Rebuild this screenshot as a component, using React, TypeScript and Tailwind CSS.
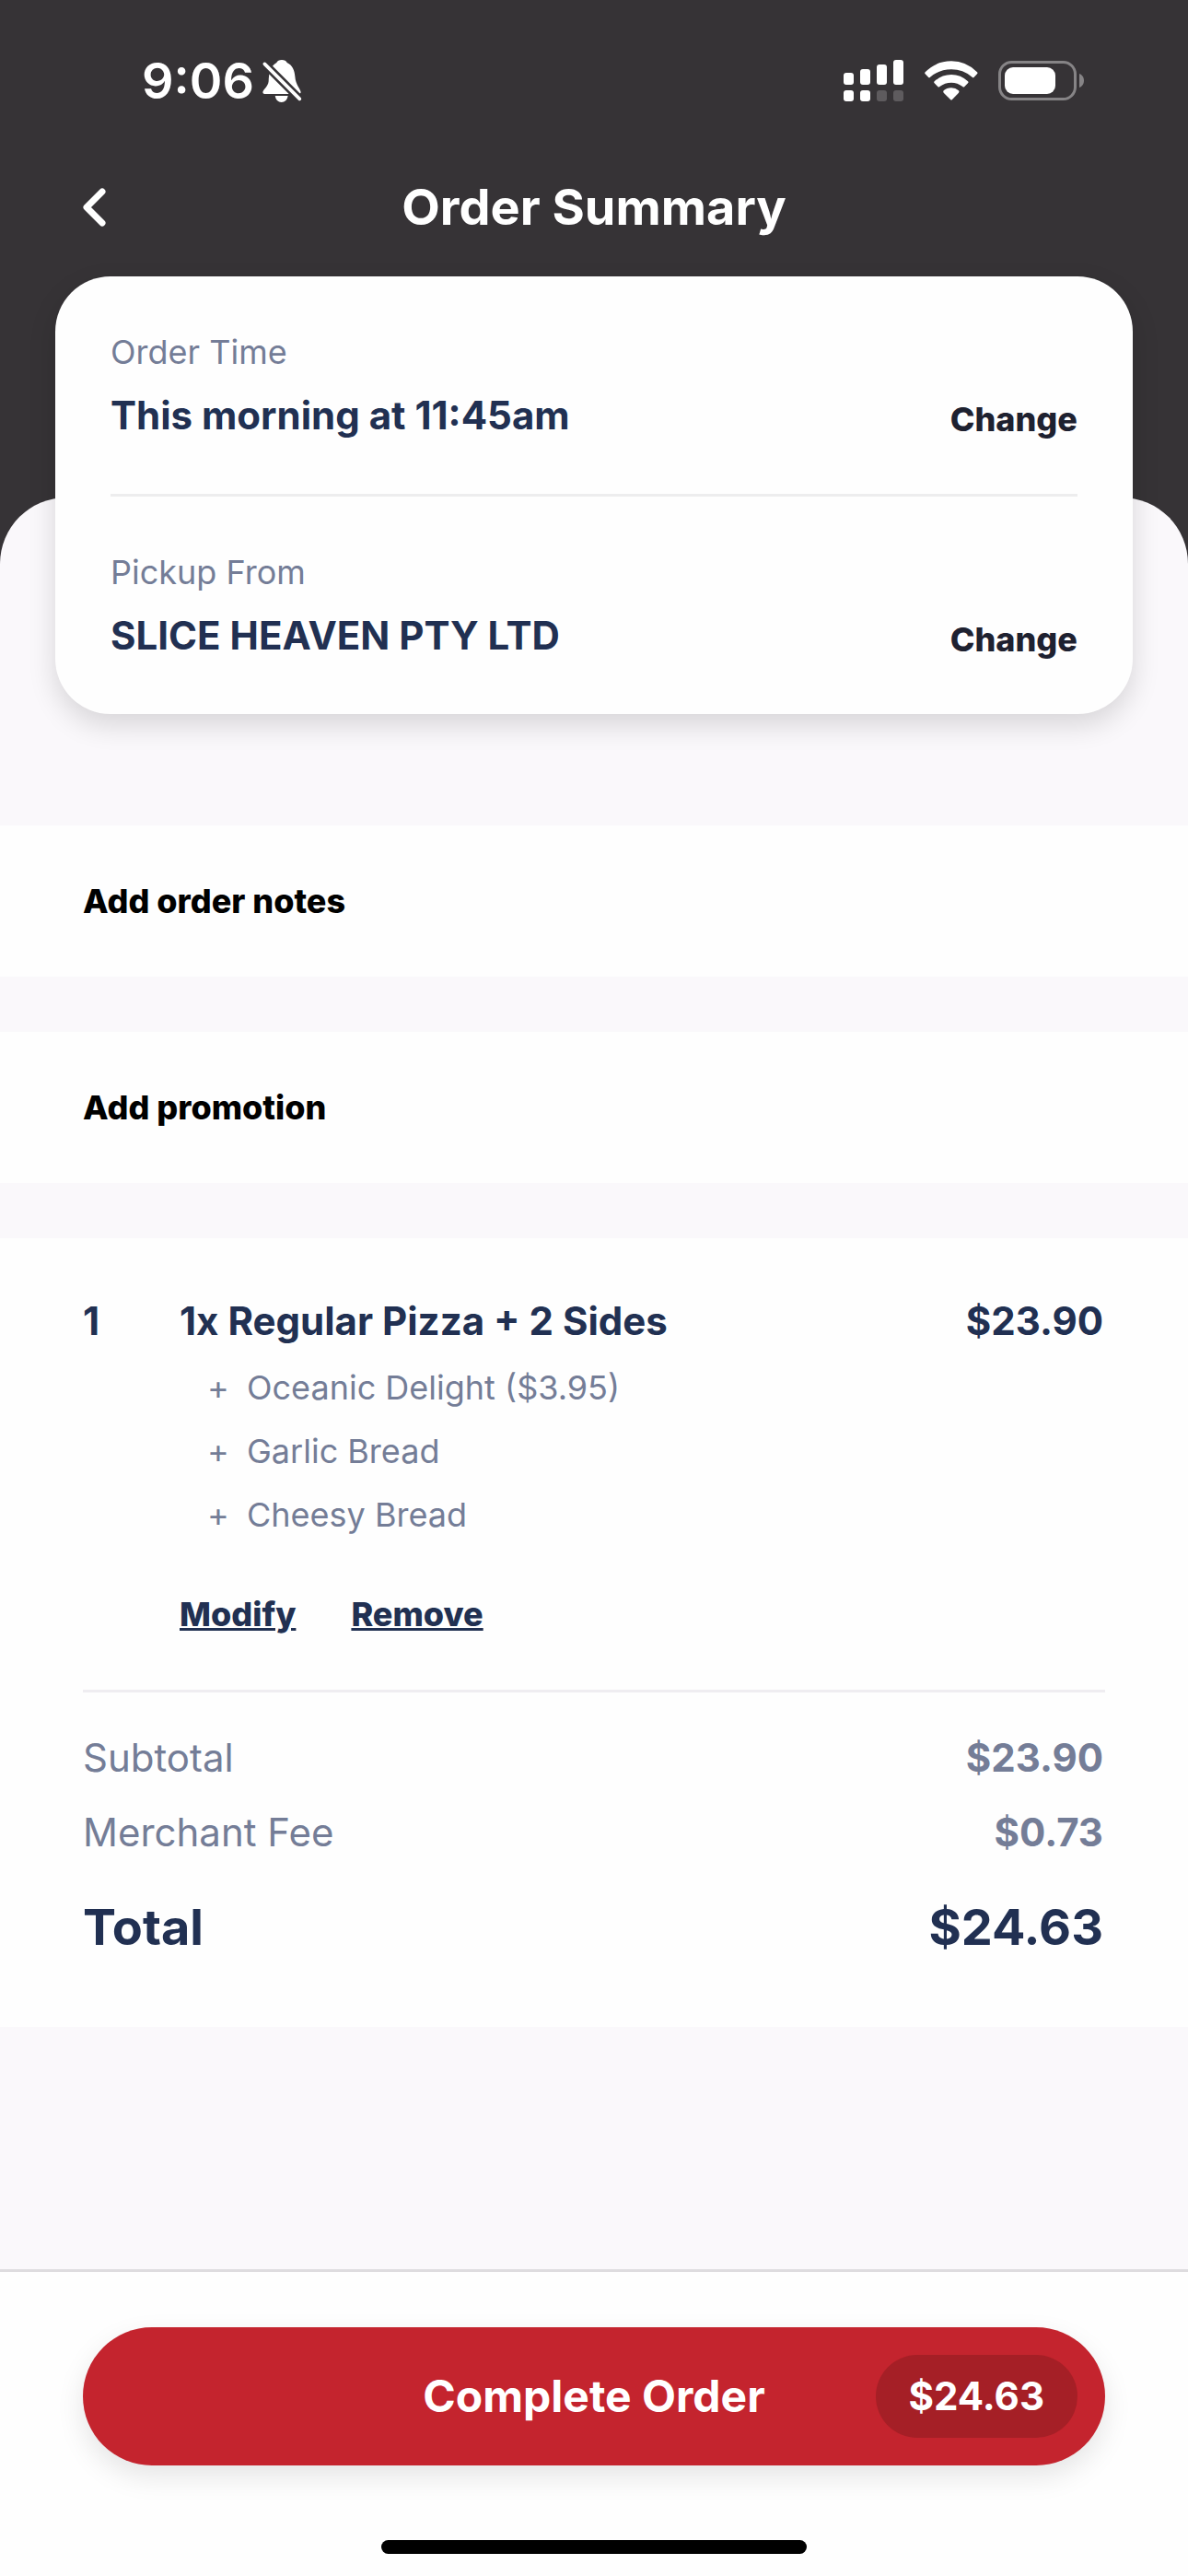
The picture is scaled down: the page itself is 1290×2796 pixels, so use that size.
import { useState } from 'react'

const MODIFIERS = ['Oceanic Delight ($3.95)', 'Garlic Bread', 'Cheesy Bread']

const FEES = [
  { label: 'Subtotal', amount: '$23.90' },
  { label: 'Merchant Fee', amount: '$0.73' },
]

function BellSlashIcon() {
  return (
    <svg width="44" height="48" viewBox="464 72 132 144" aria-hidden="true">
      <path
        d="M468 181C468 172 485 164 487 145C488 120 491 96 513 84C515 78 522 75 530 75C538 75 545 78 547 84C565 93 571 108 573 128C575 158 591 168 592 181Q591 186 586 186H474Q468 186 468 181Z"
        fill="white"
      />
      <path d="M508 192H550Q546 213 529 213Q512 213 508 192Z" fill="white" />
      <path d="M464 78L598 212" stroke="#363336" strokeWidth="27" />
      <path d="M474 88L588 202" stroke="white" strokeWidth="11" strokeLinecap="round" />
    </svg>
  )
}

function SignalIcon() {
  return (
    <svg width="66" height="46" viewBox="0 0 66 46" fill="white" aria-hidden="true">
      <rect x="0" y="14" width="11" height="13" rx="3" />
      <rect x="18" y="10" width="11" height="17" rx="3" />
      <rect x="36" y="5" width="11" height="22" rx="3" />
      <rect x="54" y="0" width="11" height="27" rx="3" />
      <rect x="0" y="33" width="11" height="12" rx="3" />
      <rect x="18" y="33" width="11" height="12" rx="3" />
      <rect x="36" y="33" width="11" height="12" rx="3" opacity="0.2" />
      <rect x="54" y="33" width="11" height="12" rx="3" opacity="0.2" />
    </svg>
  )
}

function WifiIcon() {
  return (
    <svg width="58" height="44" viewBox="341 74 174 132" fill="white" aria-hidden="true">
      <path d="M343 111Q378 75 428 75Q477 75 512 111Q515 114 512 117L502 127Q499 130 496 127Q466 102 428 102Q389 102 359 127Q356 130 353 127L343 117Q340 114 343 111Z" />
      <path d="M373 141Q396 119 428 119Q459 119 482 141Q485 144 482 147L471 158Q468 161 465 158Q448 145 428 145Q407 145 390 158Q387 161 384 158L373 147Q370 144 373 141Z" />
      <path d="M403 171Q413 162 428 162Q442 162 452 171Q455 174 452 178L431 200Q428 203 425 200L403 178Q400 174 403 171Z" />
    </svg>
  )
}

function BatteryIcon() {
  return (
    <svg width="94" height="44" viewBox="0 0 94 44" aria-hidden="true">
      <rect x="1.5" y="1.5" width="82" height="40" rx="13" fill="none" stroke="#868486" strokeWidth="3" />
      <rect x="7" y="7" width="55" height="29" rx="9" fill="white" />
      <path d="M88 14C91 15 93 18 93 21.5C93 25 91 28 88 29Z" fill="#868486" />
    </svg>
  )
}

function StatusBar() {
  return (
    <div className="flex items-center justify-between pt-[52px] pr-[112px] pl-[154px]">
      <div className="flex items-center gap-2">
        <span className="text-[54px] leading-[72px] font-semibold">9:06</span>
        <BellSlashIcon />
      </div>
      <div className="flex items-center gap-[22px]">
        <SignalIcon />
        <WifiIcon />
        <BatteryIcon />
      </div>
    </div>
  )
}

function DetailRow({ label, value }: { label: string; value: string }) {
  return (
    <div className="flex items-end justify-between pt-[60px] pb-[55px]">
      <div>
        <div className="text-[36px] leading-[44px] text-[#747d97]">{label}</div>
        <div className="mt-[17px] text-[42px] leading-[60px] font-bold text-[#213052]">{value}</div>
      </div>
      <button
        type="button"
        aria-label={`Change ${label}`}
        className="text-[36px] leading-[52px] font-extrabold text-[#1e2130]"
      >
        Change
      </button>
    </div>
  )
}

function ActionRow({ children }: { children: string }) {
  return (
    <button
      type="button"
      className="mb-[60px] block w-full bg-[#fefefe] px-[90px] py-[60px] text-left text-[36px] leading-[44px] font-extrabold text-black"
    >
      {children}
    </button>
  )
}

function OrderItem({ onRemove }: { onRemove: () => void }) {
  return (
    <article className="flex border-b-[3px] border-[#efedf1] pb-[60px] text-[#213052]">
      <span className="w-[105px] text-[42px] leading-[60px] font-bold">1</span>
      <div className="flex-1">
        <h2 className="text-[42px] leading-[60px] font-bold">1x Regular Pizza + 2 Sides</h2>
        <ul className="mt-2 pl-[30px] text-[36px] leading-[69px] text-[#747d97]">
          {MODIFIERS.map((name) => (
            <li key={name} className="flex">
              <span className="w-[43px]">+</span>
              {name}
            </li>
          ))}
        </ul>
        <div className="mt-[51px] flex gap-[60px] text-[36px] leading-[44px] font-extrabold">
          <button type="button" className="underline decoration-[3px]">
            Modify
          </button>
          <button type="button" onClick={onRemove} className="underline decoration-[3px]">
            Remove
          </button>
        </div>
      </div>
      <span className="pr-0.5 text-[42px] leading-[60px] font-bold">$23.90</span>
    </article>
  )
}

export default function App() {
  const [removed, setRemoved] = useState(false)

  return (
    <div className="flex min-h-screen flex-col bg-[#363336] font-['Inter',sans-serif]">
      <header className="text-white">
        <StatusBar />
        <div className="grid grid-cols-[1fr_auto_1fr] items-center px-[90px] pt-[65px] pb-[39px]">
          <button type="button" aria-label="Back" className="justify-self-start">
            <svg width="26" height="42" viewBox="0 0 26 42" fill="none" aria-hidden="true">
              <path d="M21 4L4 21L21 38" stroke="white" strokeWidth="7" strokeLinecap="round" strokeLinejoin="round" />
            </svg>
          </button>
          <h1 className="text-[54px] leading-[72px] font-bold">Order Summary</h1>
        </div>
      </header>

      <main className="mt-[240px] flex-1 rounded-t-[72px] bg-[#faf8fb]">
        <section className="mx-[60px] -mt-[240px] mb-[121px] divide-y-[3px] divide-[#ededee] rounded-[60px] bg-[#fefefe] px-[60px] shadow-[0_12px_30px_rgba(0,0,0,0.14)]">
          <DetailRow label="Order Time" value="This morning at 11:45am" />
          <DetailRow label="Pickup From" value="SLICE HEAVEN PTY LTD" />
        </section>

        <ActionRow>Add order notes</ActionRow>
        <ActionRow>Add promotion</ActionRow>

        <section className="bg-[#fefefe] px-[90px] pt-[60px] pb-[63px]">
          {!removed && <OrderItem onRemove={() => setRemoved(true)} />}
          <dl className="pt-[30px] pr-0.5 text-[#747d97]">
            {FEES.map((fee) => (
              <div key={fee.label} className="flex justify-between text-[42px] leading-[81px]">
                <dt>{fee.label}</dt>
                <dd className="font-bold">{fee.amount}</dd>
              </div>
            ))}
            <div className="mt-[18px] flex justify-between text-[54px] leading-[90px] font-bold text-[#213052]">
              <dt>Total</dt>
              <dd>$24.63</dd>
            </div>
          </dl>
        </section>
      </main>

      <footer className="border-t-[3px] border-[#dedcdf] bg-[#fefefe] px-[90px] pt-[60px] pb-6">
        <button
          type="button"
          className="grid h-[150px] w-full grid-cols-[1fr_auto_1fr] items-center rounded-full bg-[#c4242e] px-[30px] text-white shadow-[0_12px_30px_rgba(0,0,0,0.1)]"
        >
          <span className="col-start-2 text-[48px] leading-[60px] font-bold">Complete Order</span>
          <span className="justify-self-end rounded-full bg-[#a51f26] px-9 text-[42px] leading-[90px] font-bold">
            $24.63
          </span>
        </button>
        <div className="mx-auto mt-[81px] h-[15px] w-[462px] rounded-full bg-black" />
      </footer>
    </div>
  )
}
